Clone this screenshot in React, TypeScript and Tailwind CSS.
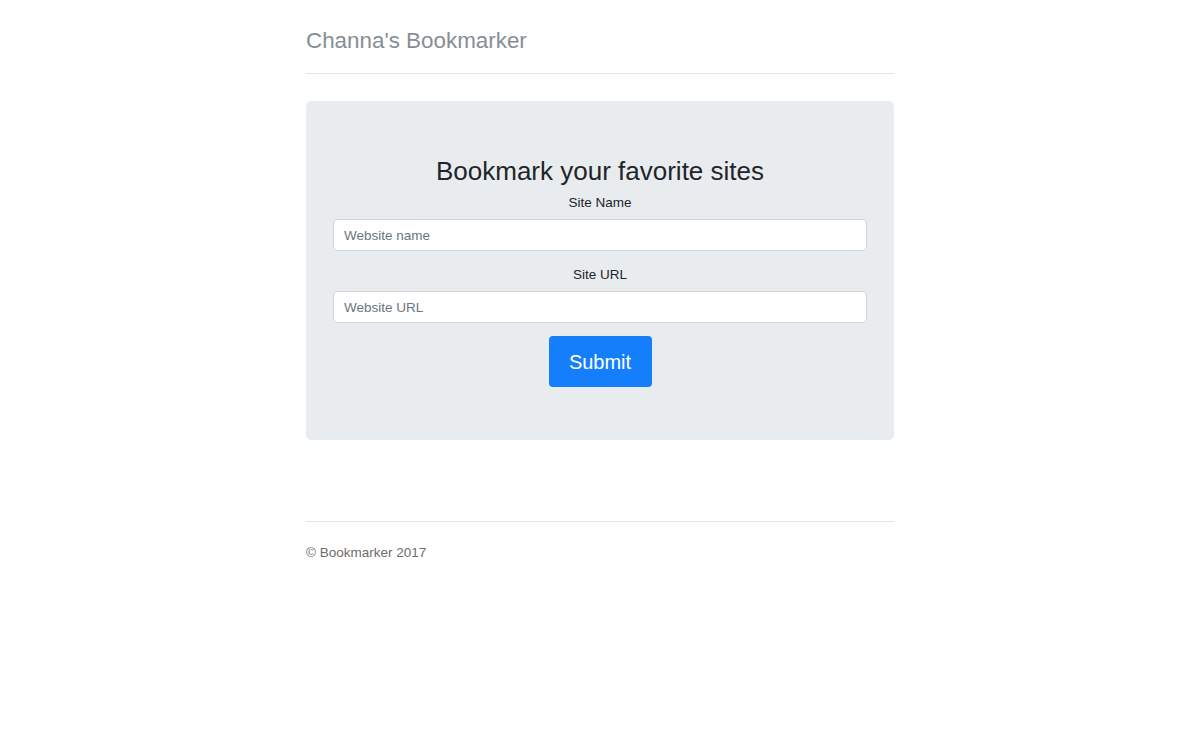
export default function App() {
  return (
    <div className="min-h-[750px] bg-white font-['Liberation_Sans',Arial,sans-serif] text-[#212529]">
      <div className="mx-auto w-[588px]">
        <header className="pt-[27px]">
          <h3 className="text-[22.4px] leading-[27px] font-normal text-[#868e96]">Channa's Bookmarker</h3>
          <hr className="mt-[19px] border-t border-[#e5e5e5]" />
        </header>

        <section className="mt-[27px] rounded-[5px] bg-[#e9ecef] px-[27px] pt-[55px] pb-[53px] text-center">
          <h2 className="text-[26px] leading-[31px] font-normal text-[#212529]">Bookmark your favorite sites</h2>
          <form className="mt-[6px]" onSubmit={(e) => e.preventDefault()}>
            <label className="block text-[13.5px] leading-[20px]">Site Name</label>
            <input
              type="text"
              placeholder="Website name"
              className="mt-[6px] block h-[32px] w-full rounded-[4px] border border-[#ced4da] bg-white px-[10px] text-[13.5px] text-[#495057] placeholder:text-[#6c757d] outline-none"
            />
            <label className="mt-[14px] block text-[13.5px] leading-[20px]">Site URL</label>
            <input
              type="text"
              placeholder="Website URL"
              className="mt-[6px] block h-[32px] w-full rounded-[4px] border border-[#ced4da] bg-white px-[10px] text-[13.5px] text-[#495057] placeholder:text-[#6c757d] outline-none"
            />
            <button
              type="submit"
              className="mt-[13px] h-[51px] w-[103px] rounded-[4px] bg-[#157ffb] text-[20px] text-white"
            >
              Submit
            </button>
          </form>
        </section>

        <footer className="mt-[81px]">
          <hr className="border-t border-[#e5e5e5]" />
          <p className="mt-[21px] text-[13.5px] leading-[20px] text-[#6c6c6c]">© Bookmarker 2017</p>
        </footer>
      </div>
    </div>
  );
}
